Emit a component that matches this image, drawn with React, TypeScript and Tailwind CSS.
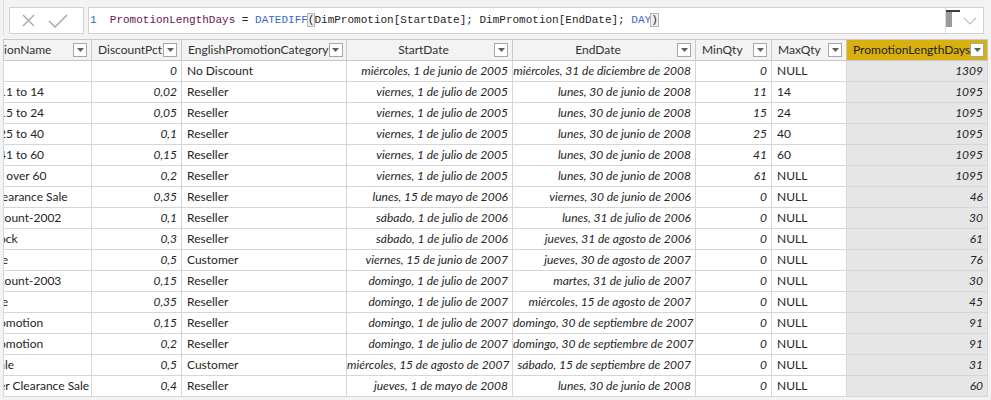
import React from 'react';

// Filas de la tabla DimPromotion (nombre visible recortado por el scroll horizontal)
const rows = [
  { name: '', pct: '0', cat: 'No Discount', start: 'miércoles, 1 de junio de 2005', end: 'miércoles, 31 de diciembre de 2008', min: '0', max: 'NULL', days: '1309' },
  { name: '11 to 14', pct: '0,02', cat: 'Reseller', start: 'viernes, 1 de julio de 2005', end: 'lunes, 30 de junio de 2008', min: '11', max: '14', days: '1095' },
  { name: '15 to 24', pct: '0,05', cat: 'Reseller', start: 'viernes, 1 de julio de 2005', end: 'lunes, 30 de junio de 2008', min: '15', max: '24', days: '1095' },
  { name: '25 to 40', pct: '0,1', cat: 'Reseller', start: 'viernes, 1 de julio de 2005', end: 'lunes, 30 de junio de 2008', min: '25', max: '40', days: '1095' },
  { name: '41 to 60', pct: '0,15', cat: 'Reseller', start: 'viernes, 1 de julio de 2005', end: 'lunes, 30 de junio de 2008', min: '41', max: '60', days: '1095' },
  { name: 't over 60', pct: '0,2', cat: 'Reseller', start: 'viernes, 1 de julio de 2005', end: 'lunes, 30 de junio de 2008', min: '61', max: 'NULL', days: '1095' },
  { name: 'learance Sale', pct: '0,35', cat: 'Reseller', start: 'lunes, 15 de mayo de 2006', end: 'viernes, 30 de junio de 2006', min: '0', max: 'NULL', days: '46' },
  { name: 'count-2002', pct: '0,1', cat: 'Reseller', start: 'sábado, 1 de julio de 2006', end: 'lunes, 31 de julio de 2006', min: '0', max: 'NULL', days: '30' },
  { name: 'ock', pct: '0,3', cat: 'Reseller', start: 'sábado, 1 de julio de 2006', end: 'jueves, 31 de agosto de 2006', min: '0', max: 'NULL', days: '61' },
  { name: 'le', pct: '0,5', cat: 'Customer', start: 'viernes, 15 de junio de 2007', end: 'jueves, 30 de agosto de 2007', min: '0', max: 'NULL', days: '76' },
  { name: 'count-2003', pct: '0,15', cat: 'Reseller', start: 'domingo, 1 de julio de 2007', end: 'martes, 31 de julio de 2007', min: '0', max: 'NULL', days: '30' },
  { name: 'le', pct: '0,35', cat: 'Reseller', start: 'domingo, 1 de julio de 2007', end: 'miércoles, 15 de agosto de 2007', min: '0', max: 'NULL', days: '45' },
  { name: 'omotion', pct: '0,15', cat: 'Reseller', start: 'domingo, 1 de julio de 2007', end: 'domingo, 30 de septiembre de 2007', min: '0', max: 'NULL', days: '91' },
  { name: 'omotion', pct: '0,2', cat: 'Reseller', start: 'domingo, 1 de julio de 2007', end: 'domingo, 30 de septiembre de 2007', min: '0', max: 'NULL', days: '91' },
  { name: 'ale', pct: '0,5', cat: 'Customer', start: 'miércoles, 15 de agosto de 2007', end: 'sábado, 15 de septiembre de 2007', min: '0', max: 'NULL', days: '31' },
  { name: 'er Clearance Sale', pct: '0,4', cat: 'Reseller', start: 'jueves, 1 de mayo de 2008', end: 'lunes, 30 de junio de 2008', min: '0', max: 'NULL', days: '60' },
];

const FilterButton = () => (
  <span className="flex h-[14px] w-[14px] shrink-0 items-center justify-center border border-[#a6a6a6] bg-white">
    <svg width="7" height="4" viewBox="0 0 7 4">
      <path d="M0 0h7L3.5 4z" fill="#605e5c" />
    </svg>
  </span>
);

const Header = ({ label, center = false, active = false }: { label: string; center?: boolean; active?: boolean }) => (
  <th
    className={`h-[21px] border border-[#c8c8c8] p-0 font-normal ${active ? 'bg-[#d9b00e] text-[#201f1e]' : 'bg-[#f3f3f3] text-[#323130]'}`}
  >
    <div className="flex items-center pl-[6px] pr-[4px]">
      <span className={`flex-1 whitespace-nowrap ${center ? 'text-center' : 'text-left'}`}>{label}</span>
      <FilterButton />
    </div>
  </th>
);

const App = () => {
  const cell = 'h-[21px] border border-[#d6d6d6] p-0 whitespace-nowrap overflow-hidden';

  return (
    <div className="h-[400px] w-[991px] overflow-hidden bg-[#f3f3f3] text-[12px] text-[#252423] font-['Lato','Segoe_UI',sans-serif]">
      {/* --- BARRA DE FÓRMULA --- */}
      <div className="ml-[3px] flex h-[35px] items-start gap-[4px] border-l border-[#dcdcdc] pl-[5px] pr-[7px] pt-[7px]">
        <div className="flex h-[27px] w-[75px] items-center gap-[13px] border border-[#d2d2d2] bg-white pl-[12px]">
          <svg width="13" height="13" viewBox="0 0 13 13">
            <path d="M1 1l11 11M12 1L1 12" stroke="#a8a8a8" strokeWidth="1.4" fill="none" />
          </svg>
          <svg width="20" height="14" viewBox="0 0 20 14">
            <path d="M1 7l6 6L19 1" stroke="#a8a8a8" strokeWidth="1.5" fill="none" />
          </svg>
        </div>
        <div className="flex h-[27px] flex-1 items-center border border-[#d2d2d2] bg-white">
          <div className="flex-1 whitespace-pre pl-[1px] font-['Liberation_Mono',monospace] text-[11px] text-[#1e1e1e]">
            <span className="text-[#237893]">1</span>
            <span>{'  '}</span>
            <span className="text-[#6a1250]">PromotionLengthDays</span>
            <span> = </span>
            <span className="text-[#3b68c9]">DATEDIFF</span>
            <span className="bg-[#f0f0f0] outline outline-1 outline-[#b4b4b4]">(</span>
            <span>DimPromotion[StartDate]; DimPromotion[EndDate]; </span>
            <span className="text-[#3b68c9]">DAY</span>
            <span className="bg-[#f0f0f0] outline outline-1 outline-[#b4b4b4]">)</span>
          </div>
          <div className="flex h-full items-center border-l border-[#dcdcdc] pr-[6px]">
            <div className="flex h-full w-[16px] flex-col pt-[2px]">
              <div className="h-[2px] w-[14px] bg-[#3c3c3c]" />
              <div className="h-[15px] w-[6px] bg-[#9a9a9a]" />
            </div>
            <svg width="14" height="8" viewBox="0 0 14 8" className="ml-[1px]">
              <path d="M1 1l6 6 6-6" stroke="#c0c0c0" strokeWidth="1.2" fill="none" />
            </svg>
          </div>
        </div>
      </div>

      {/* --- TABLA --- */}
      <div className="ml-[3px] mt-[4px]">
        <table className="w-[984px] table-fixed border-collapse">
          <colgroup>
            <col className="w-[88px]" />
            <col className="w-[90px]" />
            <col className="w-[165px]" />
            <col className="w-[166px]" />
            <col className="w-[183px]" />
            <col className="w-[76px]" />
            <col className="w-[75px]" />
            <col className="w-[141px]" />
          </colgroup>
          <thead>
            <tr>
              <th className="h-[21px] border border-[#c8c8c8] bg-[#f3f3f3] p-0 font-normal text-[#323130]">
                <div className="flex items-center pr-[4px]">
                  <span className="flex-1 text-left">ionName</span>
                  <FilterButton />
                </div>
              </th>
              <Header label="DiscountPct" />
              <Header label="EnglishPromotionCategory" />
              <Header label="StartDate" center />
              <Header label="EndDate" center />
              <Header label="MinQty" />
              <Header label="MaxQty" />
              <Header label="PromotionLengthDays" active />
            </tr>
          </thead>
          <tbody className="bg-white">
            {rows.map((r, i) => (
              <tr key={i}>
                <td className={`${cell} text-left`}>
                  <span className="ml-[-5px] block">{r.name}</span>
                </td>
                <td className={`${cell} pr-[4px] text-right italic`}>{r.pct}</td>
                <td className={`${cell} pl-[5px] text-left`}>{r.cat}</td>
                <td className={`${cell} pr-[4px] text-right italic`}>{r.start}</td>
                <td className={`${cell} pr-[4px] text-right italic`}>{r.end}</td>
                <td className={`${cell} pr-[4px] text-right italic`}>{r.min}</td>
                <td className={`${cell} pl-[5px] text-left`}>{r.max}</td>
                <td className={`${cell} bg-[#e6e6e6] pr-[4px] text-right italic`}>{r.days}</td>
              </tr>
            ))}
          </tbody>
        </table>
      </div>
    </div>
  );
};

export default App;
